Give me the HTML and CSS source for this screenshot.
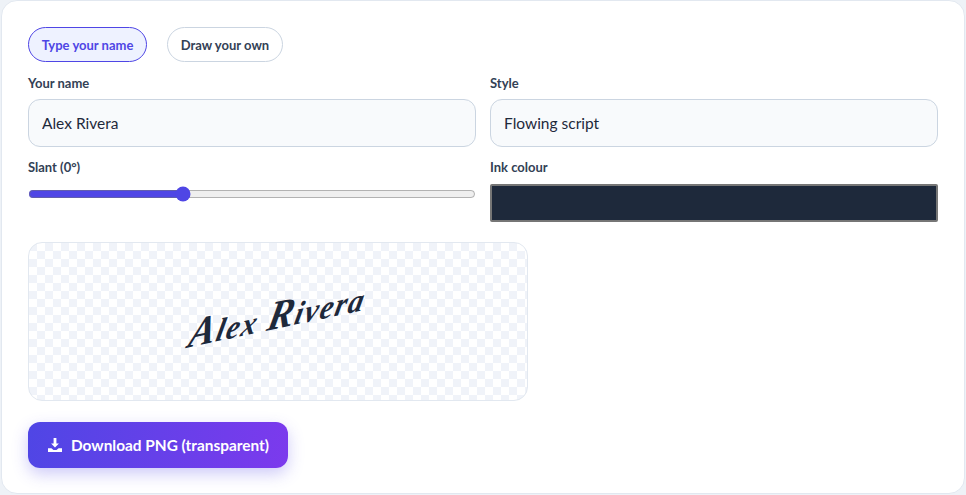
FILE: index.html
```html
<!DOCTYPE html>
<html lang="en">
<head>
<meta charset="utf-8">
<title>Signature maker</title>
<link rel="stylesheet" href="styles.css">
</head>
<body>
<main class="card">
  <div class="tabs">
    <button class="tab active" type="button">Type your name</button>
    <button class="tab" type="button">Draw your own</button>
  </div>
  <div class="grid">
    <div class="field">
      <label class="label" for="name">Your name</label>
      <input class="control" id="name" type="text" value="Alex Rivera">
    </div>
    <div class="field">
      <label class="label" for="style">Style</label>
      <select class="control" id="style"><option>Flowing script</option></select>
    </div>
    <div class="field">
      <label class="label" for="slant">Slant (0°)</label>
      <input class="range" id="slant" type="range" min="-17" max="33" value="0">
    </div>
    <div class="field">
      <label class="label" for="ink">Ink colour</label>
      <input class="swatch" id="ink" type="color" value="#1e293b">
    </div>
  </div>
  <div class="preview"><span class="signature"><span class="cap">A</span>lex <span class="cap">R</span>ivera</span></div>
  <button class="download" type="button">
    <svg class="icon" viewBox="0 0 16 16" aria-hidden="true"><path d="M6.600 1h2.800v5.400h2.500L8 10.600 4.100 6.400h2.500z"/><path d="M1 11.200h3.400L6.500 13h3l2.100-1.800H15V15H1z"/></svg>
    Download PNG (transparent)
  </button>
</main>
</body>
</html>
```
FILE: styles.css
```css
* { box-sizing: border-box; }
html, body { margin: 0; height: 100%; }
body {
  background: #eef2f7;
  font-family: Lato, "Noto Sans", sans-serif;
  color: #1e293b;
  overflow: hidden;
}
.card {
  width: 964px;
  height: 494px;
  margin-left: 1px;
  padding: 26px 26px 0;
  background: #fff;
  border: 1px solid #e2e8f0;
  border-radius: 16px;
}
.tabs { display: flex; gap: 20px; margin-bottom: 13px; }
.tab {
  width: 116px;
  height: 35px;
  padding: 0;
  border: 1px solid #cbd5e1;
  border-radius: 999px;
  background: #fff;
  font: 700 13px Lato, sans-serif;
  color: #334155;
}
.tab.active { width: 119px; background: #eef2ff; border-color: #4f46e5; color: #4f46e5; }
.grid { display: grid; grid-template-columns: 448px 448px; column-gap: 14px; row-gap: 12px; }
.field { display: flex; flex-direction: column; }
.label { font-size: 13px; font-weight: 700; line-height: 16px; height: 16px; margin-bottom: 8px; color: #334155; }
.control {
  width: 100%;
  height: 48px;
  padding: 0 13px;
  border: 1px solid #cbd5e1;
  border-radius: 12px;
  background: #f8fafc;
  font: 400 15.500px Lato, sans-serif;
  color: #1e293b;
  appearance: none;
}
.range { width: 100%; height: 16px; margin: 3px 0 0; accent-color: #4f46e5; }
.swatch { width: 100%; height: 38px; padding: 0; margin-top: 1px; border: 2px solid #767676; border-radius: 2px; background: #1e293b; }
.swatch::-webkit-color-swatch-wrapper { padding: 0; }
.swatch::-webkit-color-swatch { border: 0; }
.preview {
  width: 500px;
  height: 159px;
  margin-top: 20px;
  border: 1px solid #e2e8f0;
  border-radius: 14px;
  background-color: #fff;
  background-image: conic-gradient(#fff 25%, #f0f3f9 0 50%, #fff 0 75%, #f0f3f9 0);
  background-size: 16px 16px;
  display: flex;
  align-items: center;
  justify-content: center;
}
.signature {
  font: italic 700 31px "Liberation Serif", serif;
  letter-spacing: 1.600px;
  color: #1e293b;
  white-space: nowrap;
  transform: translate(0, -7px) rotate(-12deg) skewX(-24deg);
}
.cap { font-size: 40px; }
.download {
  display: flex;
  align-items: center;
  justify-content: center;
  gap: 8px;
  width: 260px;
  height: 46px;
  margin-top: 21px;
  border: 0;
  border-radius: 12px;
  background: linear-gradient(100deg, #4f46e5, #7c3aed);
  box-shadow: 0 6px 16px rgba(79, 70, 229, .28);
  color: #fff;
  font: 700 15.400px Lato, sans-serif;
}
.icon { width: 16px; height: 16px; fill: #fff; }
```
